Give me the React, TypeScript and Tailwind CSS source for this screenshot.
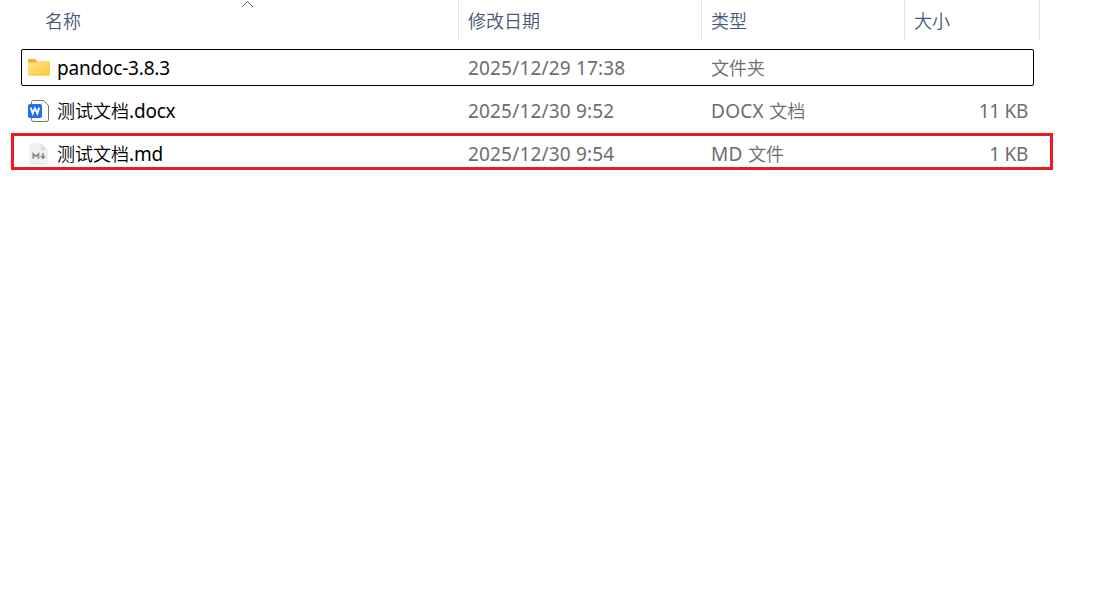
import type { ReactNode } from "react"

type FileRow = {
  name: string
  date: string
  type: string
  size: string
  icon: ReactNode
  focused?: boolean
  marked?: boolean
}

function FolderIcon() {
  return (
    <svg width="24" height="24" viewBox="0 0 24 24">
      <defs>
        <linearGradient id="folder" x1="0" y1="0" x2="1" y2="1">
          <stop offset="0" stopColor="#ffe393" />
          <stop offset="1" stopColor="#fdc932" />
        </linearGradient>
      </defs>
      <path d="M1 4Q1 2.9 2.2 2.9H7.4Q8.2 2.9 8.7 3.5L10.3 5H21.8Q23 5 23 6.2V12H1Z" fill="#f4b120" />
      <path d="M1 7.4Q1 6.6 1.8 6.6H7.8Q8.4 6.6 9 6.1L9.8 5.4Q10.3 5 11 5H22Q23 5 23 6V18.2Q23 19.2 22 19.2H2Q1 19.2 1 18.2Z" fill="url(#folder)" />
      <path d="M1.3 18.7Q1.7 19.1 2.4 19.1H21.6Q22.3 19.1 22.7 18.7" fill="none" stroke="#e9ad2c" strokeWidth="0.6" />
    </svg>
  )
}

function WordIcon() {
  return (
    <svg width="24" height="24" viewBox="0 0 24 24">
      <path d="M4.5 5V3.4Q4.5 1.5 6.4 1.5H16.5L21.5 6.5V20.6Q21.5 22.5 19.6 22.5H6.4Q4.5 22.5 4.5 20.6V18" fill="#fff" stroke="#6b7078" strokeWidth="1" />
      <rect x="1" y="5" width="14" height="14" rx="2" fill="#1f6ef7" />
      <path d="M3.8 8.6L5.7 14.4L8 9.4L10.3 14.4L12.2 8.6" fill="none" stroke="#fff" strokeWidth="1.9" />
    </svg>
  )
}

function MarkdownIcon() {
  return (
    <svg width="24" height="24" viewBox="0 0 24 24">
      <path d="M4 2H14.5L20.3 8V20.6Q20.3 22 18.9 22H4.5Q3.1 22 3.1 20.6V3Q3.1 2 4 2Z" fill="#f1f1f1" stroke="#e6e6e6" strokeWidth="0.6" />
      <path d="M3.4 21.9H20" stroke="#dadada" strokeWidth="0.8" />
      <path d="M13.8 2L20.3 8.5H15.2Q13.8 8.5 13.8 7.1Z" fill="#dedede" />
      <path d="M6.3 16.7V11.9L8.9 14.4L11.5 11.9V16.7" fill="none" stroke="#8b8b8b" strokeWidth="1.7" />
      <path d="M15.9 11V16.3M13.9 14L15.9 16.2L17.9 14" fill="none" stroke="#8b8b8b" strokeWidth="1.6" />
    </svg>
  )
}

const files: FileRow[] = [
  { name: "pandoc-3.8.3", date: "2025/12/29 17:38", type: "文件夹", size: "", icon: <FolderIcon />, focused: true },
  { name: "测试文档.docx", date: "2025/12/30 9:52", type: "DOCX 文档", size: "11 KB", icon: <WordIcon /> },
  { name: "测试文档.md", date: "2025/12/30 9:54", type: "MD 文件", size: "1 KB", icon: <MarkdownIcon />, marked: true },
]

// Latin runs are set a little larger than the Chinese ones
function Label({ text }: { text: string }) {
  const runs = text.match(/[\u4e00-\u9fff]+|[^\u4e00-\u9fff]+/g) ?? []
  return (
    <span className="whitespace-pre">
      {runs.map((run, i) => (
        <span key={i} className={/[\u4e00-\u9fff]/.test(run) ? "text-[18px] font-[350] tracking-normal" : "text-[19px]"}>
          {run}
        </span>
      ))}
    </span>
  )
}

function Header() {
  return (
    <div className="grid h-10 w-[1040px] grid-cols-[459px_243px_203px_135px] grid-rows-[40px] text-[18px] font-[350] leading-[42px] text-[#445a78]">
      <div className="relative border-r border-[#e5e5e5] pl-[45px]">
        名称
        <svg className="absolute left-[241px] top-0" width="13" height="9" viewBox="0 0 13 9">
          <path d="M1 7L6.5 1.5L12 7" fill="none" stroke="#5f5f5f" strokeWidth="1" />
        </svg>
      </div>
      <div className="border-r border-[#e5e5e5] pl-[9px]">修改日期</div>
      <div className="border-r border-[#e5e5e5] pl-[9px]">类型</div>
      <div className="border-r border-[#e5e5e5] pl-[9px]">大小</div>
    </div>
  )
}

function Row({ file }: { file: FileRow }) {
  return (
    <div
      className={`relative grid h-[37px] w-[1013px] grid-cols-[446px_243px_203px_1fr] rounded-[2px] border leading-[37px] text-[#6d6d6d] ${
        file.focused ? "border-black" : "border-transparent"
      }`}
    >
      <div className="flex h-[35px] items-center gap-[6px] pl-[5px] tracking-[-0.2px] text-black">
        {file.icon}
        <div className="pt-[2px]">
          <Label text={file.name} />
        </div>
      </div>
      <div className="tracking-[0.17px]">
        <Label text={file.date} />
      </div>
      <div className="tracking-[0.3px]">
        <Label text={file.type} />
      </div>
      <div className="pr-[5px] text-right tracking-[-0.3px]">
        <Label text={file.size} />
      </div>
      {file.marked && (
        <div className="absolute -left-[11px] -top-[3px] h-[37px] w-[1042px] border-[3px] border-[#ed1c24]" />
      )}
    </div>
  )
}

export default function App() {
  return (
    <div className="h-[589px] w-[1095px] overflow-hidden bg-white font-['Noto_Sans','Noto_Sans_CJK_SC',sans-serif]">
      <Header />
      <div className="flex flex-col gap-[6px] pl-[21px] pt-[9px]">
        {files.map((file) => (
          <Row key={file.name} file={file} />
        ))}
      </div>
    </div>
  )
}
